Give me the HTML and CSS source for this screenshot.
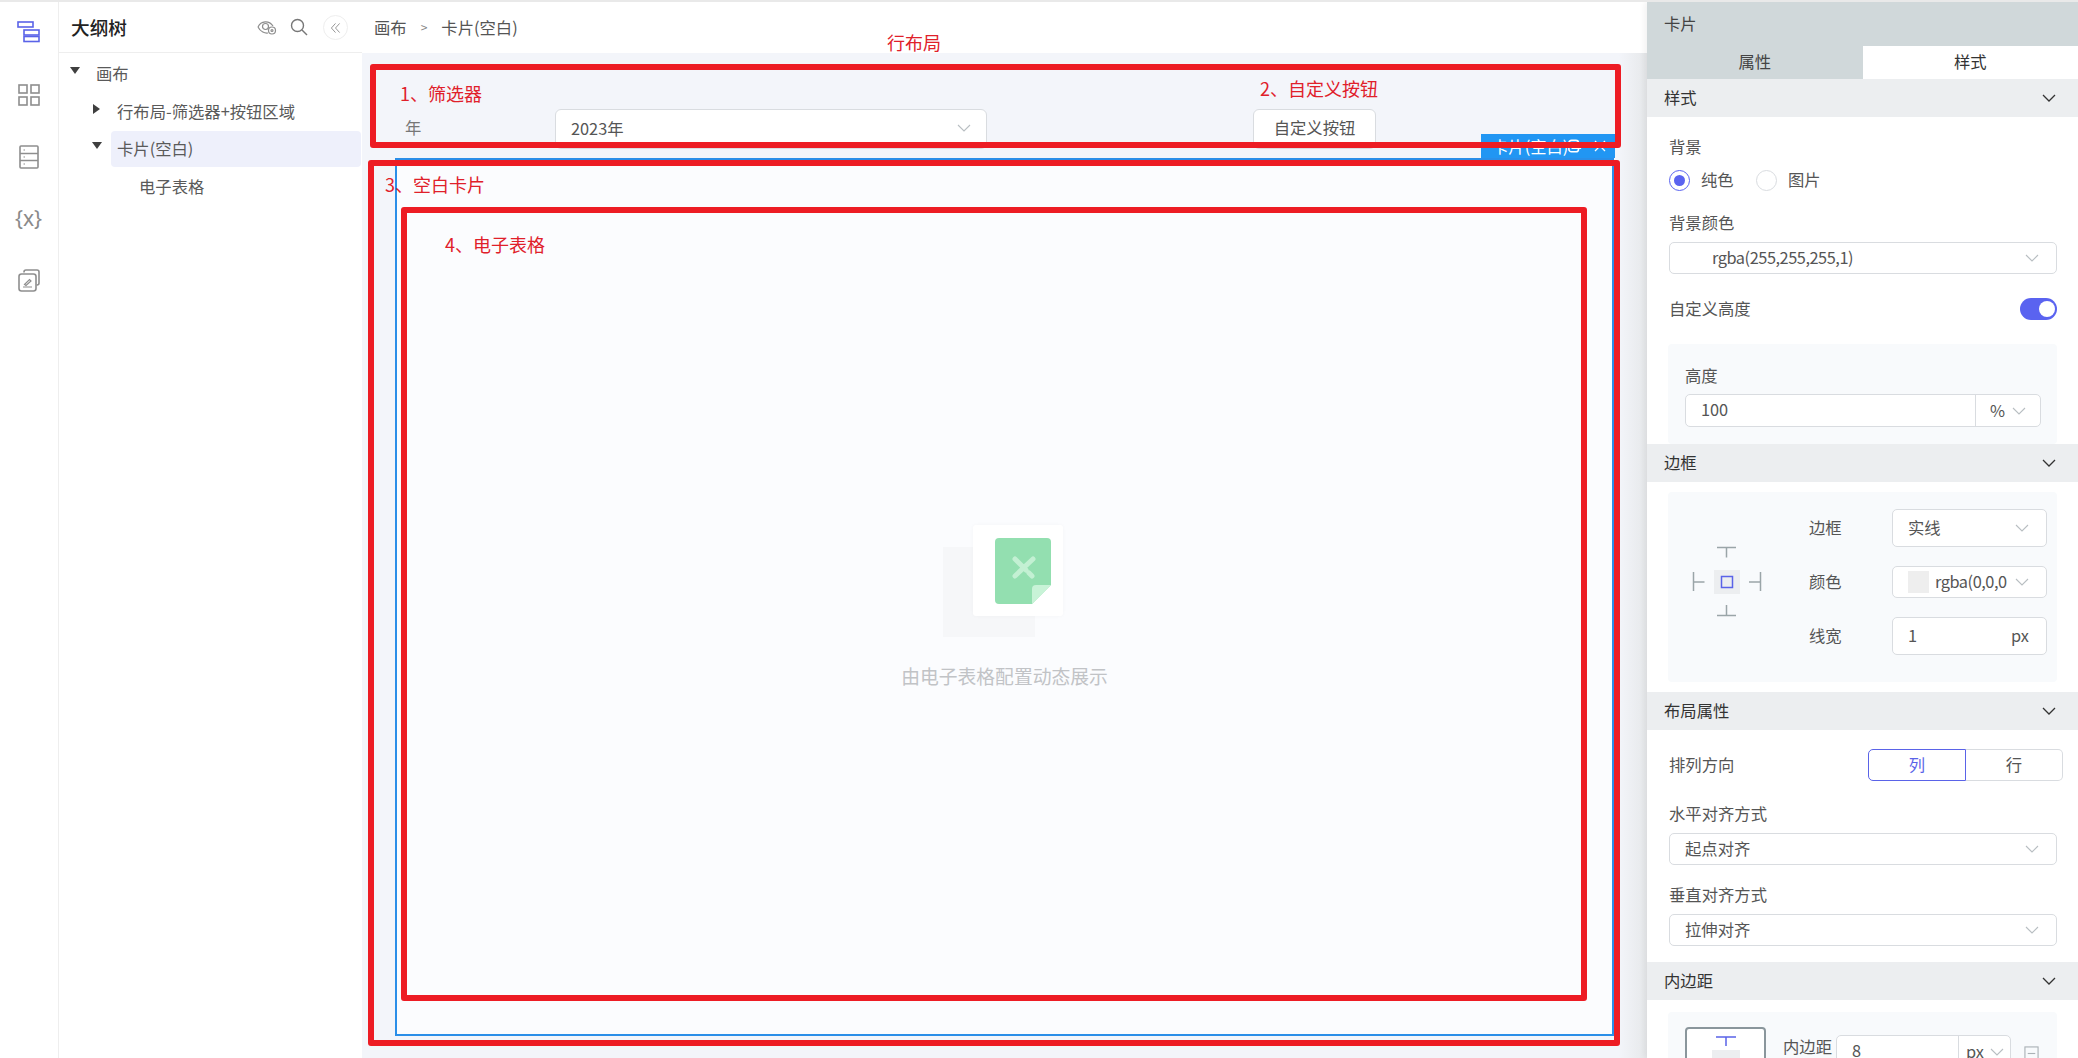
FILE: index.html
```html
<!DOCTYPE html>
<html lang="zh-CN">
<head>
<meta charset="utf-8">
<title>卡片</title>
<link rel="stylesheet" href="styles.css">
</head>
<body>
<div class="app">
  <nav class="rail">
    <svg class="rail-icon" viewBox="0 0 24 24" fill="none" stroke="#5a63e8" stroke-width="1.6"><rect x="1" y="1" width="15" height="5"/><rect x="7" y="9" width="15" height="5"/><rect x="7" y="15.5" width="15" height="5"/></svg>
    <svg class="rail-icon" viewBox="0 0 24 24" fill="none" stroke="#8e8e8e" stroke-width="1.6"><rect x="2" y="2" width="8" height="8"/><rect x="14" y="2" width="8" height="8"/><rect x="2" y="14" width="8" height="8"/><rect x="14" y="14" width="8" height="8"/></svg>
    <svg class="rail-icon" viewBox="0 0 24 24" fill="none" stroke="#8e8e8e" stroke-width="1.6"><rect x="3" y="1" width="18" height="22" rx="1"/><path d="M3 8.5h18M3 15.5h18"/><path d="M6.500 5h1.500M6.500 12h1.500M6.500 19h1.500" stroke-width="1.200"/></svg>
    <div class="rail-var">{x}</div>
    <svg class="rail-icon" viewBox="0 0 24 24" fill="none" stroke="#8e8e8e" stroke-width="1.6"><path d="M7 3.500V3a2 2 0 0 1 2-2h11a2 2 0 0 1 2 2v11a2 2 0 0 1-2 2h-.5"/><rect x="2" y="5" width="17" height="17" rx="2.500"/><path d="M6 18h9M7.500 15.500l5-5 1.500 1.500-5 4.500z" stroke-width="1.200"/></svg>
  </nav>

  <aside class="outline">
    <header class="outline-head">
      <h1 class="outline-title">大纲树</h1>
      <svg class="eye" viewBox="0 0 20 15" fill="none" stroke="#8d8d8d" stroke-width="1.200"><path d="M1 7c3-6.500 11-7 15-1"/><path d="M1 7c2.500 5 7 6.500 10 6"/><circle cx="8.500" cy="6.500" r="3"/><circle cx="15" cy="10.500" r="3.500"/><circle cx="15" cy="10.500" r="1"/></svg>
      <svg class="search" viewBox="0 0 18 18" fill="none" stroke="#777" stroke-width="1.400"><circle cx="7.500" cy="7.500" r="6"/><path d="M12 12l5 5"/></svg>
      <button class="collapse" type="button"><svg viewBox="0 0 12 12" fill="none" stroke="#8d8d8d" stroke-width="1"><path d="M6 1L1.500 6 6 11M10.500 1L6 6l4.500 5"/></svg></button>
    </header>
    <div class="tree">
      <div class="node lv0"><i class="arrow down"></i><span class="node-label">画布</span></div>
      <div class="node lv1"><i class="arrow right"></i><span class="node-label">行布局-筛选器+按钮区域</span></div>
      <div class="node lv1"><i class="arrow down"></i><span class="node-label active">卡片(空白)</span></div>
      <div class="node lv2"><i class="arrow"></i><span class="node-label">电子表格</span></div>
    </div>
  </aside>

  <main class="main">
    <div class="crumbs"><span>画布</span><span class="crumb-sep">&gt;</span><span>卡片(空白)</span></div>
    <div class="canvas">
      <div class="filter-row">
        <span class="filter-label">年</span>
        <div class="filter-select"><span>2023年</span><svg class="chev" viewBox="0 0 14 8"><path d="M1 1l6 6 6-6"/></svg></div>
        <button class="custom-btn" type="button">自定义按钮</button>
      </div>
      <section class="card">
        <div class="card-tag">
          <span>卡片(空白)</span>
          <svg class="tag-copy" viewBox="0 0 16 16" fill="none" stroke="#fff" stroke-width="1.800"><rect x="1" y="1" width="11" height="13" rx="3"/><path d="M4 6h11M4 10h11"/></svg>
          <svg class="tag-close" viewBox="0 0 12 12" fill="none" stroke="#fff" stroke-width="1.300"><path d="M1 1l10 10M11 1L1 11"/></svg>
        </div>
        <div class="empty">
          <div class="empty-art">
            <div class="empty-back"></div>
            <div class="empty-front">
              <svg class="doc" viewBox="0 0 56 66"><path d="M4 0h48a4 4 0 0 1 4 4v43L37 66H4a4 4 0 0 1-4-4V4a4 4 0 0 1 4-4z" fill="#93dfb0"/><path d="M56 47H41a4 4 0 0 0-4 4v15z" fill="#c8f3d7"/><path d="M20 21l11 11M34 35l3 3M38 21L20 38" stroke="#c3f0d3" stroke-width="5" stroke-linecap="round"/></svg>
            </div>
          </div>
          <p class="empty-text">由电子表格配置动态展示</p>
        </div>
      </section>
    </div>
  </main>

  <aside class="panel">
    <div class="panel-title">卡片</div>
    <div class="tabs"><div class="tab">属性</div><div class="tab on">样式</div></div>

    <div class="sec-head"><span>样式</span><svg class="sec-chev" viewBox="0 0 14 8"><path d="M1 1l6 6 6-6"/></svg></div>
    <div class="sec-body style-body">
      <div class="lbl">背景</div>
      <div class="radios">
        <span class="radio on"></span><span class="radio-text">纯色</span>
        <span class="radio"></span><span class="radio-text">图片</span>
      </div>
      <div class="lbl lbl-gap">背景颜色</div>
      <div class="sel sel-color"><span class="latin-tight">rgba(255,255,255,1)</span><svg class="chev" viewBox="0 0 14 8"><path d="M1 1l6 6 6-6"/></svg></div>
      <div class="toggle-row"><span>自定义高度</span><i class="toggle"></i></div>
      <div class="sub height-sub">
        <div class="lbl">高度</div>
        <div class="unit-input">
          <span class="unit-val">100</span>
          <span class="unit-sel">%<svg class="chev" viewBox="0 0 14 8"><path d="M1 1l6 6 6-6"/></svg></span>
        </div>
      </div>
    </div>

    <div class="sec-head"><span>边框</span><svg class="sec-chev" viewBox="0 0 14 8"><path d="M1 1l6 6 6-6"/></svg></div>
    <div class="sec-body border-body">
      <div class="sub border-sub">
        <svg class="border-diagram" viewBox="0 0 116 190" fill="none" stroke="#9aa5a8" stroke-width="1.500">
          <rect x="46" y="78" width="26" height="24" fill="#eceef0" stroke="none"/>
          <rect x="53.500" y="84.500" width="11" height="11" stroke="#5a63e8"/>
          <path d="M49 55.500h19M58.500 55.500v10M25.500 80v19M25.500 90h11M92.500 80v19M81 90h11M49 123.500h19M58.500 113v10"/>
        </svg>
        <div class="border-rows">
          <div class="brow"><span class="brow-label">边框</span><div class="sel tall"><span>实线</span><svg class="chev" viewBox="0 0 14 8"><path d="M1 1l6 6 6-6"/></svg></div></div>
          <div class="brow"><span class="brow-label">颜色</span><div class="sel short"><i class="swatch"></i><span class="swatch-text latin-tight">rgba(0,0,0</span><svg class="chev" viewBox="0 0 14 8"><path d="M1 1l6 6 6-6"/></svg></div></div>
          <div class="brow"><span class="brow-label">线宽</span><div class="sel tall"><span>1</span><span>px</span></div></div>
        </div>
      </div>
    </div>

    <div class="sec-head"><span>布局属性</span><svg class="sec-chev" viewBox="0 0 14 8"><path d="M1 1l6 6 6-6"/></svg></div>
    <div class="sec-body layout-body">
      <div class="dir-row">
        <span>排列方向</span>
        <div class="seg"><span class="seg-item on">列</span><span class="seg-item">行</span></div>
      </div>
      <div class="lbl lbl-h">水平对齐方式</div>
      <div class="sel"><span>起点对齐</span><svg class="chev" viewBox="0 0 14 8"><path d="M1 1l6 6 6-6"/></svg></div>
      <div class="lbl lbl-v">垂直对齐方式</div>
      <div class="sel"><span>拉伸对齐</span><svg class="chev" viewBox="0 0 14 8"><path d="M1 1l6 6 6-6"/></svg></div>
    </div>

    <div class="sec-head"><span>内边距</span><svg class="sec-chev" viewBox="0 0 14 8"><path d="M1 1l6 6 6-6"/></svg></div>
    <div class="sec-body padding-body">
      <div class="sub padding-sub">
        <div class="pad-box">
          <svg class="pad-t" viewBox="0 0 20 10" fill="none" stroke="#5a63e8" stroke-width="1.500"><path d="M0 1h20M10 1v9"/></svg>
          <i class="pad-fill"></i>
        </div>
        <span class="pad-label">内边距</span>
        <div class="pad-input"><span class="pad-val">8</span><span class="pad-unit">px<svg class="chev" viewBox="0 0 14 8"><path d="M1 1l6 6 6-6"/></svg></span></div>
        <svg class="pad-link" viewBox="0 0 16 16" fill="none" stroke="#aab2b6" stroke-width="1.200"><rect x="1" y="1" width="14" height="14"/><path d="M4 8h8"/></svg>
      </div>
    </div>
  </aside>

  <div class="ann-box ann-1"></div>
  <div class="ann-box ann-3"></div>
  <div class="ann-box ann-4"></div>
  <div class="ann-text t-row">行布局</div>
  <div class="ann-text t-1">1、筛选器</div>
  <div class="ann-text t-2">2、自定义按钮</div>
  <div class="ann-text t-3">3、空白卡片</div>
  <div class="ann-text t-4">4、电子表格</div>
</div>
</body>
</html>
```

FILE: styles.css
```css
* { box-sizing: border-box; }
html, body { margin: 0; height: 100%; overflow: hidden; }
body {
  font-family: "Noto Sans CJK SC", "Noto Sans", sans-serif;
  font-size: 16.33px;
  color: #555;
  background: #fff;
}
.app {
  position: relative;
  display: flex;
  width: 2078px;
  height: 1058px;
  border-top: 2px solid #e9e9e9;
  overflow: hidden;
}

/* left rail */
.rail {
  flex: none;
  width: 59px;
  border-right: 1px solid #eeeeee;
  display: flex;
  flex-direction: column;
  align-items: center;
  padding: 19px 1px 0 0;
  gap: 38px;
}
.rail-icon { width: 24px; height: 24px; display: block; flex: none; }
.rail-var {
  height: 24px;
  line-height: 22px;
  font-size: 21px;
  color: #8a8a8a;
  font-family: "Noto Sans", sans-serif;
}

/* outline */
.outline { flex: none; width: 303px; }
.outline-head {
  height: 51px;
  display: flex;
  align-items: center;
  padding: 0 14px 0 12px;
  border-bottom: 1px solid #eeeeee;
}
.outline-title {
  margin: 0 auto 2px 0;
  font-size: 18.67px;
  font-weight: 500;
  color: #222;
}
.eye { width: 20px; height: 15px; }
.search { width: 18px; height: 18px; margin-left: 13px; }
.collapse {
  width: 25px;
  height: 25px;
  margin-left: 15px;
  padding: 6px;
  border: 1px solid #eeeeee;
  border-radius: 50%;
  background: #fff;
  display: flex;
}
.collapse svg { width: 12px; height: 12px; }

.tree { padding-top: 2px; color: #5a5a5a; }
.node { display: flex; align-items: center; height: 37.700px; }
.lv0 { padding-left: 9px; }
.lv1 { padding-left: 31px; }
.lv2 { padding-left: 52px; }
.arrow { flex: none; width: 22px; height: 12px; position: relative; margin-bottom: 6px; }
.lv1 .arrow { width: 21px; }
.arrow.down::before {
  content: "";
  position: absolute;
  left: 2px;
  top: 2px;
  border-style: solid;
  border-width: 7px 5px 0;
  border-color: #3f3f3f transparent transparent;
}
.arrow.right::before {
  content: "";
  position: absolute;
  left: 3px;
  top: 1px;
  border-style: solid;
  border-width: 5px 0 5px 7px;
  border-color: transparent transparent transparent #3f3f3f;
}
.node-label {
  flex: 1;
  height: 36px;
  line-height: 34px;
  padding: 0 6px;
  margin-right: 1px;
  border-radius: 4px;
}
.node-label.active { background: #eef0fb; }

/* main */
.main { flex: none; width: 1285px; display: flex; flex-direction: column; }
.crumbs {
  flex: none;
  height: 51px;
  display: flex;
  align-items: center;
  padding: 0 0 2px 12px;
  gap: 13px;
  color: #555;
}
.crumb-sep { font-size: 12px; color: #888; padding: 0 1px; }
.canvas {
  flex: 1;
  display: flex;
  flex-direction: column;
  padding: 0 33px 22px 33px;
  background: linear-gradient(to right, #f3f5fa 0, #f3f5fa 97.8%, #e6e8ea 100%);
}
.filter-row {
  flex: none;
  height: 105px;
  padding-top: 56px;
  display: flex;
  align-items: flex-start;
  overflow: hidden;
}
.filter-label { width: 160px; padding-left: 10px; line-height: 36px; color: #777; }
.filter-select {
  width: 432px;
  height: 40px;
  padding: 0 15px;
  display: flex;
  align-items: flex-start;
  justify-content: space-between;
  line-height: 36px;
  background: #fff;
  border: 1px solid #d9dce0;
  border-radius: 6px;
  color: #555;
}
.filter-select .chev { margin-top: 14px; }
.custom-btn {
  width: 123px;
  height: 40px;
  margin-left: 266px;
  padding: 0 0 4px;
  font: inherit;
  color: #555;
  background: #fff;
  border: 1px solid #d9dce0;
  border-radius: 6px;
  display: block;
}
.chev { flex: none; width: 14px; height: 8px; fill: none; stroke: #b8bec2; stroke-width: 1.100; }

.card {
  flex: 1;
  position: relative;
  background: #fbfcfe;
  border: 2px solid #2a8ee8;
  padding-top: 365px;
}
.card-tag {
  position: absolute;
  right: -3px;
  top: -26px;
  width: 134px;
  height: 24px;
  padding-left: 11px;
  background: #2196f3;
  color: #fff;
  display: flex;
  align-items: center;
  line-height: 24px;
}
.tag-copy { width: 14px; height: 15px; }
.tag-close { width: 12px; height: 12px; margin-left: 12px; }

.empty { display: flex; flex-direction: column; align-items: center; }
.empty-art { position: relative; width: 120px; height: 112px; margin-right: 4px; }
.empty-back { position: absolute; left: 0; top: 22px; width: 92px; height: 90px; background: #f6f7f9; }
.empty-front {
  position: absolute;
  left: 30px;
  top: 0;
  width: 90px;
  height: 91px;
  background: #fff;
  border-radius: 3px;
  padding: 13px 0 0 22px;
  box-shadow: 0 0 4px rgba(0, 0, 0, 0.03);
}
.doc { display: block; width: 56px; height: 66px; }
.empty-text { margin: 25px 0 0; font-size: 18.8px; line-height: 28px; color: #c1c3c6; }

/* right panel */
.panel {
  flex: none;
  width: 431px;
  position: relative;
  background: #fff;
  box-shadow: -3px 0 6px rgba(0, 0, 0, 0.05);
}
.panel-title { height: 44px; padding: 0 0 2px 17px; line-height: 42px; background: #d0d8da; color: #444; }
.tabs { display: flex; height: 33px; }
.tab { flex: 1; text-align: center; line-height: 31px; background: #d0d8da; color: #444; }
.tab.on { background: #fff; color: #333; }
.sec-head {
  height: 38px;
  display: flex;
  align-items: center;
  justify-content: space-between;
  padding: 0 22px 0 17px;
  background: #eceef0;
  color: #333;
}
.sec-head > span,
.sel > span,
.brow-label,
.radio-text,
.toggle-row > span,
.dir-row > span { padding-bottom: 2px; }
.sec-chev { width: 14px; height: 8px; fill: none; stroke: #333; stroke-width: 1.300; }
.sec-body { padding: 0 21px 0 22px; }
.lbl { height: 24px; line-height: 22px; }
.style-body { padding-top: 18px; }
.radios { display: flex; align-items: center; height: 24px; margin-top: 9px; }
.radio {
  width: 21px;
  height: 21px;
  border: 1px solid #d9dce0;
  border-radius: 50%;
  background: #fff;
  position: relative;
}
.radio.on { border-color: #5a63f0; }
.radio.on::after {
  content: "";
  position: absolute;
  inset: 4px;
  border-radius: 50%;
  background: #5a63f0;
}
.radio-text { margin: 0 21px 0 11px; width: 34px; }
.lbl-gap { margin-top: 19px; }
.lbl-h { margin-top: 21px; }
.lbl-v { margin-top: 18px; }
.sel {
  height: 32px;
  margin-top: 7px;
  padding: 0 17px 0 15px;
  display: flex;
  align-items: center;
  justify-content: space-between;
  border: 1px solid #d9dce0;
  border-radius: 5px;
  background: #fff;
}
.sel-color { padding-left: 42px; }
.latin-tight { letter-spacing: -0.45px; }
.toggle-row {
  display: flex;
  align-items: center;
  justify-content: space-between;
  height: 24px;
  margin-top: 23px;
}
.toggle { width: 37px; height: 22px; border-radius: 11px; background: #5a63f0; position: relative; }
.toggle::after {
  content: "";
  position: absolute;
  right: 2px;
  top: 3px;
  width: 16px;
  height: 16px;
  border-radius: 50%;
  background: #fff;
}
.sub { background: #f8fafc; border-radius: 4px; }
.height-sub { margin: 23px 0 0 -1px; height: 100px; padding: 20px 16px 0 17px; }
.unit-input {
  display: flex;
  height: 33px;
  margin-top: 6px;
  border: 1px solid #d9dce0;
  border-radius: 5px;
  background: #fff;
  line-height: 29px;
}
.unit-val { flex: 1; padding-left: 15px; }
.unit-sel {
  flex: none;
  width: 65px;
  padding-left: 14px;
  border-left: 1px solid #d9dce0;
  display: flex;
  align-items: center;
  gap: 7px;
}
.border-body { padding-top: 10px; padding-bottom: 10px; }
.border-sub { display: flex; height: 190px; margin-left: -1px; }
.border-diagram { flex: none; width: 116px; height: 190px; }
.border-rows { margin-left: 25px; padding-top: 17px; width: 238px; }
.brow { display: flex; align-items: center; margin-bottom: 19px; }
.brow-label { width: 83px; flex: none; }
.brow .sel { width: 155px; margin: 0; }
.sel.tall { height: 38px; }
.sel.short { height: 32px; padding-right: 17px; }
.swatch { flex: none; width: 21px; height: 22px; background: #eeeeee; margin-right: 6px; }
.swatch-text { flex: 1; min-width: 0; white-space: nowrap; }
.layout-body { padding-top: 19px; padding-bottom: 16px; }
.dir-row { display: flex; align-items: center; justify-content: space-between; height: 32px; margin-right: -6px; }
.seg { display: flex; width: 195px; height: 32px; }
.seg-item {
  flex: 1;
  text-align: center;
  line-height: 28px;
  border: 1px solid #d9dce0;
  border-left: 0;
  border-radius: 0 5px 5px 0;
}
.seg-item.on {
  color: #5a63e8;
  border: 1px solid #5a63e8;
  border-radius: 5px 0 0 5px;
}
.padding-body { padding-top: 12px; }
.padding-sub { display: flex; align-items: flex-start; height: 120px; margin-left: -1px; padding: 15px 0 0 17px; }
.pad-box {
  flex: none;
  width: 81px;
  height: 70px;
  border: 2px solid #8a969c;
  border-radius: 4px;
  background: #fff;
  display: flex;
  flex-direction: column;
  align-items: center;
  padding-top: 7px;
}
.pad-t { width: 20px; height: 10px; }
.pad-fill { width: 28px; height: 14px; margin-top: 4px; background: #eceef0; }
.pad-label { margin: 7px 6px 0 17px; flex: none; width: 47px; line-height: 24px; white-space: nowrap; }
.pad-input {
  flex: none;
  display: flex;
  width: 175px;
  height: 33px;
  margin-top: 8px;
  border: 1px solid #d9dce0;
  border-radius: 5px;
  background: #fff;
  line-height: 29px;
}
.pad-val { width: 121px; padding-left: 15px; }
.pad-unit { flex: 1; padding-left: 7px; border-left: 1px solid #d9dce0; display: flex; align-items: center; gap: 6px; }
.pad-link { flex: none; width: 15px; height: 15px; margin: 19px 0 0 13px; }

/* red annotations drawn over the page */
.ann-box { position: absolute; border: 6px solid #ed1c24; border-radius: 3px; pointer-events: none; }
.ann-1 { left: 370px; top: 62px; width: 1251px; height: 84px; }
.ann-3 { left: 368px; top: 158px; width: 1252px; height: 886px; }
.ann-4 { left: 401px; top: 205px; width: 1186px; height: 794px; }
.ann-text { position: absolute; font-size: 18px; line-height: 24px; color: #e0202a; white-space: nowrap; }
.t-row { left: 887px; top: 28px; }
.t-1 { left: 400px; top: 79px; }
.t-2 { left: 1260px; top: 74px; }
.t-3 { left: 385px; top: 170px; }
.t-4 { left: 445px; top: 230px; }
```
